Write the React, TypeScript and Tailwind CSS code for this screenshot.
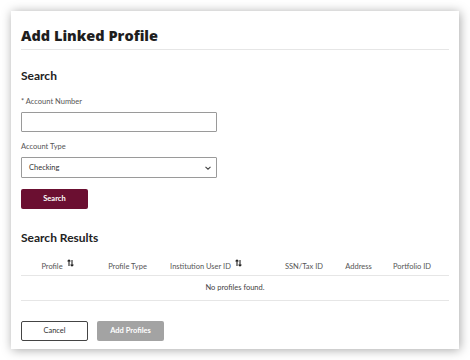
import React from "react";

function SortIcon() {
  return (
    <svg width="7" height="8" viewBox="0 0 7 8" className="inline-block ml-[4px] -mt-[7px] align-middle" fill="none" stroke="#222" strokeWidth="1.1">
      <path d="M2 7V1M0.6 2.4L2 1L3.4 2.4" />
      <path d="M5 1v6M3.6 5.6L5 7L6.4 5.6" />
    </svg>
  );
}

export default function App() {
  const body = { fontFamily: '"Lato", "Liberation Sans", sans-serif' };
  return (
    <div className="w-[470px] h-[360px] bg-white p-[11px]" style={body}>
      <div className="w-[448px] h-[338px] bg-white shadow-[1px_1px_10px_rgba(0,0,0,0.35)] px-[10px] flex flex-col">
        <div className="h-[39px] border-b border-[#e6e6e6] flex items-center pt-[12px]">
          <h1
            className="text-[14.5px] font-extrabold text-[#1e1e1e]"
            style={{ fontFamily: '"Open Sans", "Liberation Sans", sans-serif' }}
          >
            Add Linked Profile
          </h1>
        </div>

        <h2 className="mt-[18px] text-[12px] font-bold text-[#222] leading-[16px]">Search</h2>

        <label className="mt-[12px] text-[7.5px] text-[#555] leading-[12px]">* Account Number</label>
        <div className="mt-[4px] w-[196px] h-[20px] border border-[#9a9a9a] rounded-[1px]" />

        <label className="mt-[9px] text-[7.5px] text-[#555] leading-[12px]">Account Type</label>
        <div className="mt-[4px] w-[196px] h-[21px] border border-[#9a9a9a] rounded-[1px] flex items-center justify-between pl-[7px] pr-[5px]">
          <span className="text-[7.5px] text-[#333]">Checking</span>
          <svg width="6" height="4" viewBox="0 0 6 4" fill="none" stroke="#444" strokeWidth="1.1">
            <path d="M0.5 0.8L3 3.2L5.5 0.8" />
          </svg>
        </div>

        <button className="mt-[11px] w-[67px] h-[20px] bg-[#6b0f31] rounded-[2px] text-white text-[7.5px] font-bold">
          Search
        </button>

        <h2 className="mt-[21px] text-[12px] font-bold text-[#222] leading-[16px]">Search Results</h2>

        <div className="mt-[12px] grid grid-cols-[66px_81px_76px_32px_56px_53px_54px] h-[18px] items-center border-b border-[#e6e6e6] text-[7.5px] text-[#555]">
          <div className="text-center pl-[7px] whitespace-nowrap">Profile<SortIcon /></div>
          <div className="text-center whitespace-nowrap">Profile Type</div>
          <div className="text-center whitespace-nowrap">Institution User ID<SortIcon /></div>
          <div />
          <div className="text-center whitespace-nowrap">SSN/Tax ID</div>
          <div className="text-center">Address</div>
          <div className="text-center whitespace-nowrap">Portfolio ID</div>
        </div>
        <div className="h-[25px] flex items-center justify-center border-b border-[#e6e6e6] text-[7.5px] text-[#444]">
          No profiles found.
        </div>

        <div className="mt-[20px] flex gap-[9px]">
          <button className="w-[67px] h-[20px] border border-[#444] rounded-[2px] bg-white text-[7.5px] text-[#333]">
            Cancel
          </button>
          <button className="w-[67px] h-[20px] bg-[#a3a3a3] rounded-[2px] text-[7.5px] text-white font-bold">
            Add Profiles
          </button>
        </div>
      </div>
    </div>
  );
}
